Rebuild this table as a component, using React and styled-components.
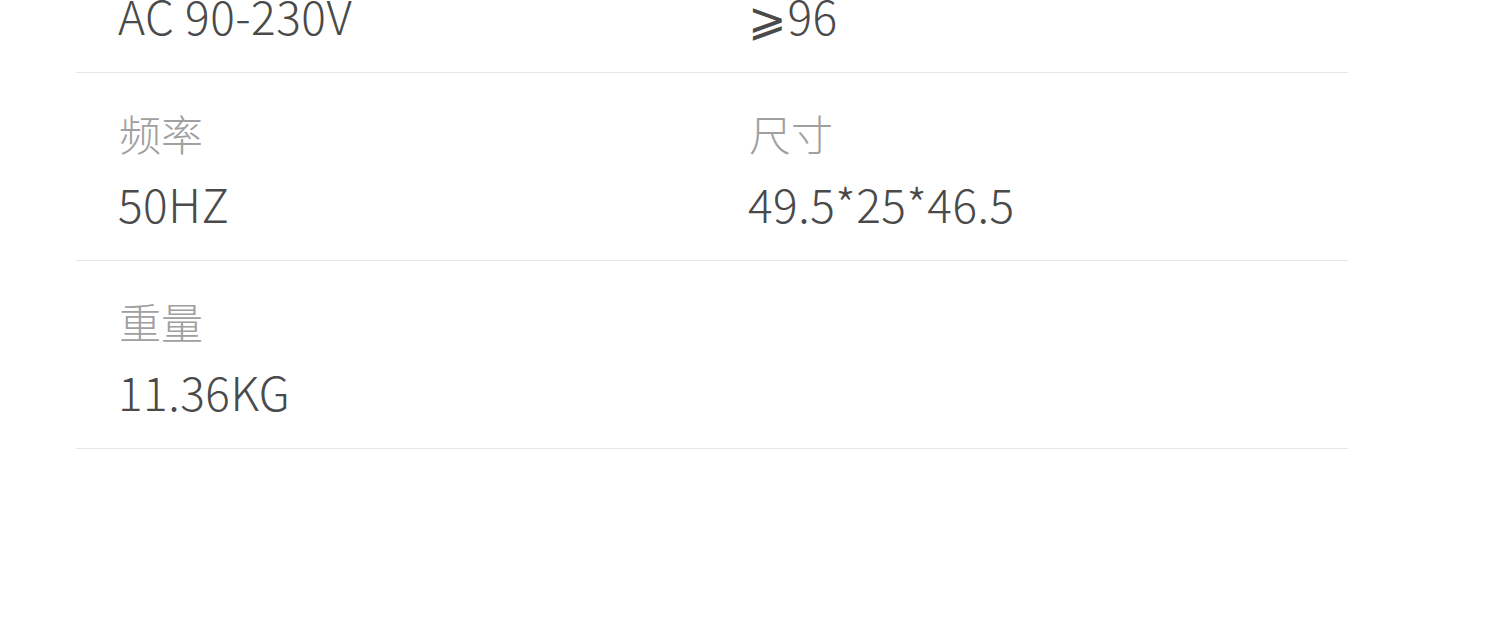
import React from 'react';
import styled, {createGlobalStyle} from 'styled-components';

const GlobalStyle = createGlobalStyle`
  html, body {
    margin: 0;
    padding: 0;
    background: #fff;
  }
  body {
    font-family: "Noto Sans CJK SC", "Noto Sans", sans-serif;
    overflow: hidden;
  }
`;

const Page = styled.div`
  height: 641px;
  overflow: hidden;
`;

// the list is scrolled, so the first row sits partly above the fold
const SpecTable = styled.div`
  width: 1272px;
  margin: -115px 0 0 76px;
`;

const SpecRow = styled.div`
  display: grid;
  grid-template-columns: 630px 1fr;
  padding: 30px 0 25px 43px;
  border-bottom: 1px solid #e6e6e6;
`;

const SpecCell = styled.div`
  display: flex;
  flex-direction: column;
  gap: 8px;
`;

const SpecLabel = styled.div`
  font-size: 42px;
  font-weight: 300;
  line-height: 60px;
  height: 60px;
  color: #a0a0a0;
`;

const SpecValue = styled.div`
  margin-left: -1px;
  font-size: 46px;
  font-weight: 300;
  letter-spacing: 0.5px;
  line-height: 64px;
  height: 64px;
  color: #4a4a4a;
`;

const specs = [
  [
    {label: '电压', value: 'AC 90-230V'},
    {label: '显色指数', value: '⩾96'},
  ],
  [
    {label: '频率', value: '50HZ'},
    {label: '尺寸', value: '49.5*25*46.5'},
  ],
  [{label: '重量', value: '11.36KG'}],
];

export default function App() {
  return (
    <Page>
      <GlobalStyle />
      <SpecTable>
        {specs.map((row, index) => (
          <SpecRow key={index}>
            {row.map(item => (
              <SpecCell key={item.label}>
                <SpecLabel>{item.label}</SpecLabel>
                <SpecValue>{item.value}</SpecValue>
              </SpecCell>
            ))}
          </SpecRow>
        ))}
      </SpecTable>
    </Page>
  );
}
